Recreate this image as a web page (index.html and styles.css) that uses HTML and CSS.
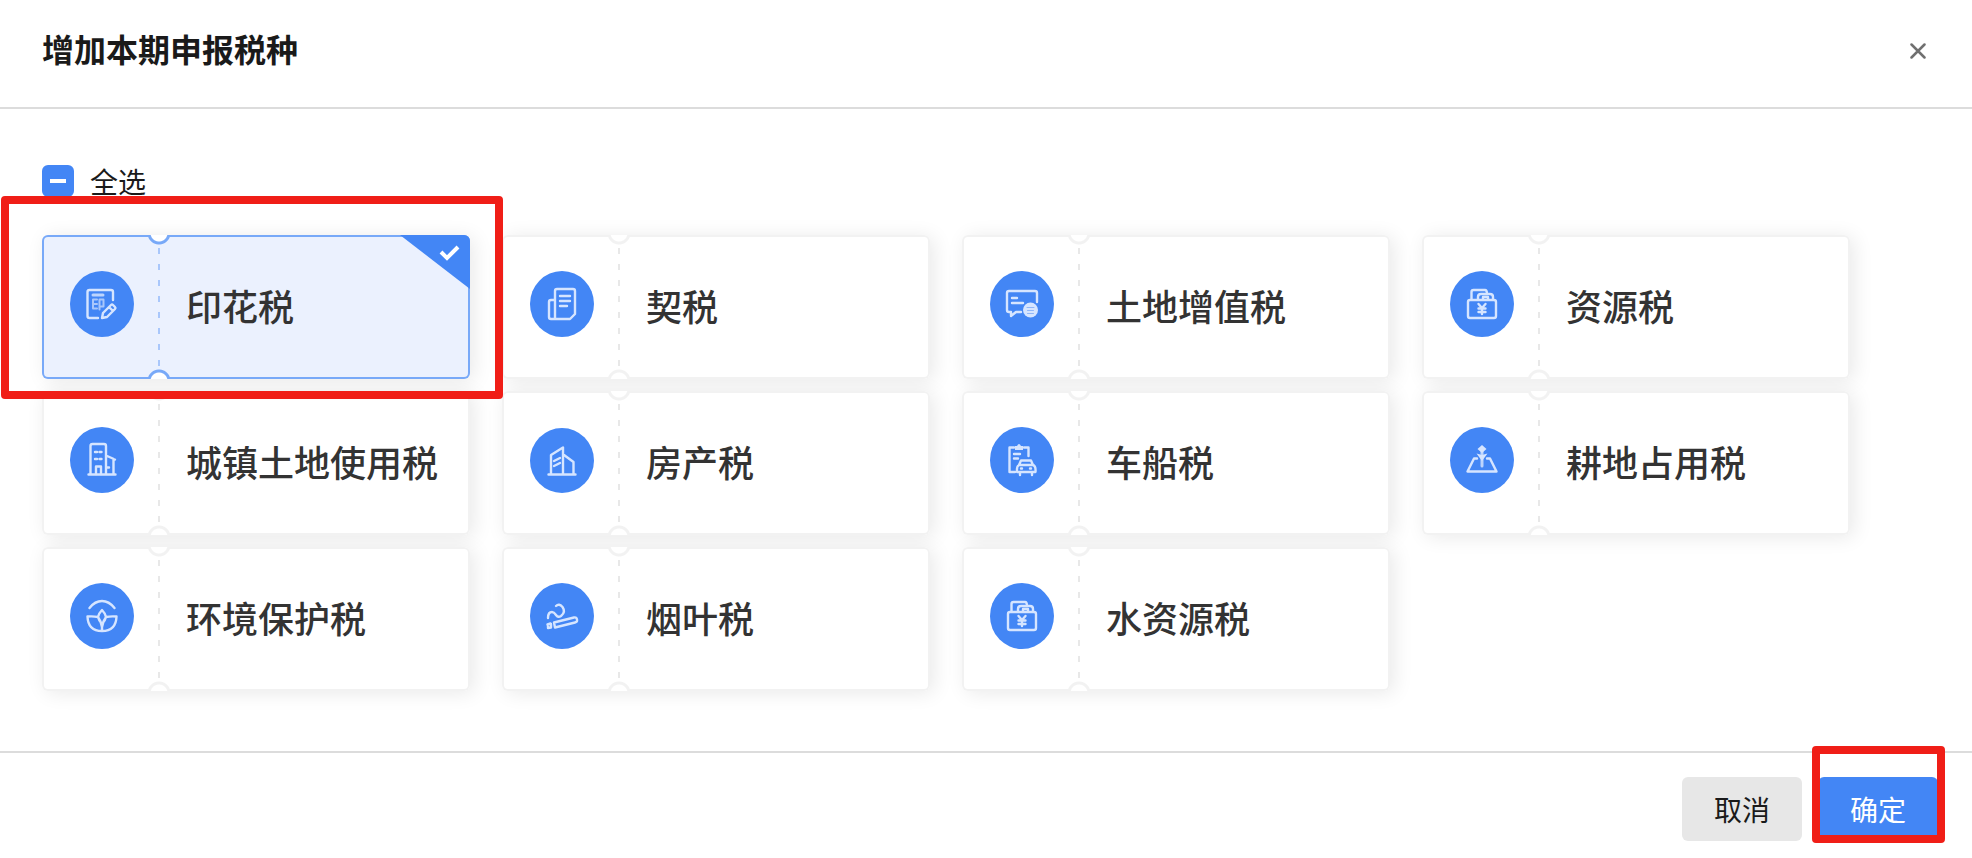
FILE: index.html
```html
<!DOCTYPE html>
<html lang="zh-CN">
<head>
    <meta charset="UTF-8">
    <meta name="viewport" content="width=device-width, initial-scale=1">
    <title>增加本期申报税种</title>
    <link rel="stylesheet" href="styles.css">
</head>
<body>

    <div class="dialog">
        <header class="dialog_header">
            <h1 class="dialog_title">增加本期申报税种</h1>
            <button type="button" class="close_btn" aria-label="关闭">
                <svg width="16" height="16" viewBox="0 0 16 16"><path d="M1.5 1.5 14.5 14.5M14.5 1.5 1.5 14.5"/></svg>
            </button>
        </header>

        <main class="dialog_body">
            <label class="check_all">
                <input type="checkbox" id="check_all" class="check_box">
                <span>全选</span>
            </label>

            <ul class="tax_list">
                <li class="tax_item">
                    <label class="tax_card">
                        <input type="checkbox" class="tax_input" checked>
                        <svg class="tax_icon" viewBox="0 0 64 66">
                            <ellipse class="disc" cx="32" cy="33" rx="32" ry="33"/>
                            <path d="M43 29V21a2 2 0 0 0-2-2H19.5a2 2 0 0 0-2 2V45a2 2 0 0 0 2 2H28"/>
                            <path class="bold" d="M23 24H33"/>
                            <path class="thin" d="M27 28.5H23V37.5H27M23 33H27M29.5 38.5V28.5H33.5V35.5H31"/>
                            <path d="M32 47l1-5 8-8q1-1 2 0l2 2q1 1 0 2l-8 8zM39 36l4 4"/>
                        </svg>
                        <span class="tax_name">印花税</span>
                        <svg class="tax_corner" viewBox="0 0 70 54"><path class="fold" d="M0 0H70V54z"/><path class="tick" d="M41 17 47 23 58 12"/></svg>
                    </label>
                    <span class="mark mark_card"></span>
                </li>
                <li class="tax_item">
                    <label class="tax_card">
                        <input type="checkbox" class="tax_input">
                        <svg class="tax_icon" viewBox="0 0 64 66">
                            <ellipse class="disc" cx="32" cy="33" rx="32" ry="33"/>
                            <path d="M25 48V20a2 2 0 0 1 2-2H43a2 2 0 0 1 2 2V43l-5 5H21a2 2 0 0 1-2-2V31a2 2 0 0 1 2-2H25"/>
                            <path d="M30 25H40M30 30H40M30 35H37"/>
                        </svg>
                        <span class="tax_name">契税</span>
                        <svg class="tax_corner" viewBox="0 0 70 54"><path class="fold" d="M0 0H70V54z"/><path class="tick" d="M41 17 47 23 58 12"/></svg>
                    </label>
                </li>
                <li class="tax_item">
                    <label class="tax_card">
                        <input type="checkbox" class="tax_input">
                        <svg class="tax_icon" viewBox="0 0 64 66">
                            <ellipse class="disc" cx="32" cy="33" rx="32" ry="33"/>
                            <path d="M47 31V22a2 2 0 0 0-2-2H19a2 2 0 0 0-2 2V39a2 2 0 0 0 2 2h2v4l5-4h5"/>
                            <path d="M22 27H27M22 32H33"/>
                            <circle class="fill" cx="40.5" cy="39" r="7.5"/>
                            <path class="blue" d="M37 36.5H44M37.5 39.5H43.5M37.5 42.5H43.5"/>
                        </svg>
                        <span class="tax_name">土地增值税</span>
                        <svg class="tax_corner" viewBox="0 0 70 54"><path class="fold" d="M0 0H70V54z"/><path class="tick" d="M41 17 47 23 58 12"/></svg>
                    </label>
                </li>
                <li class="tax_item">
                    <label class="tax_card">
                        <input type="checkbox" class="tax_input">
                        <svg class="tax_icon" viewBox="0 0 64 66">
                            <ellipse class="disc" cx="32" cy="33" rx="32" ry="33"/>
                            <rect x="18" y="29" width="28" height="18" rx="2"/>
                            <path d="M21.5 28V21a2 2 0 0 1 2-2H35q2 0 2 4M28 28V26q0-3 3-3H40q3 0 3 3V28M33 28v-2h5v2"/>
                            <path d="M28.5 33 32 37 35.5 33M32 37V43M28.5 37.5H35.5M28.5 41H35.5"/>
                        </svg>
                        <span class="tax_name">资源税</span>
                        <svg class="tax_corner" viewBox="0 0 70 54"><path class="fold" d="M0 0H70V54z"/><path class="tick" d="M41 17 47 23 58 12"/></svg>
                    </label>
                </li>
                <li class="tax_item">
                    <label class="tax_card">
                        <input type="checkbox" class="tax_input">
                        <svg class="tax_icon" viewBox="0 0 64 66">
                            <ellipse class="disc" cx="32" cy="33" rx="32" ry="33"/>
                            <path d="M18.5 47.5H45.5M20.5 47V19a2 2 0 0 1 2-2H34a2 2 0 0 1 2 2V47M36 28.5 45 32.5M43.5 32V47"/>
                            <path d="M25 25H27M29.5 25H31.5M25 32H27M29.5 32H31.5M26 47V39.5H31V47M37 40.5H39"/>
                        </svg>
                        <span class="tax_name">城镇土地使用税</span>
                        <svg class="tax_corner" viewBox="0 0 70 54"><path class="fold" d="M0 0H70V54z"/><path class="tick" d="M41 17 47 23 58 12"/></svg>
                    </label>
                </li>
                <li class="tax_item">
                    <label class="tax_card">
                        <input type="checkbox" class="tax_input">
                        <svg class="tax_icon" viewBox="0 0 64 66">
                            <ellipse class="disc" cx="32" cy="33.5" rx="32" ry="32.5"/>
                            <path d="M18.5 47.5H45.5M21 47V28L33 20.5V47M34 28 43.5 35V47"/>
                            <path d="M24 34 30 31M24 39 30 36"/>
                        </svg>
                        <span class="tax_name">房产税</span>
                        <svg class="tax_corner" viewBox="0 0 70 54"><path class="fold" d="M0 0H70V54z"/><path class="tick" d="M41 17 47 23 58 12"/></svg>
                    </label>
                </li>
                <li class="tax_item">
                    <label class="tax_card">
                        <input type="checkbox" class="tax_input">
                        <svg class="tax_icon" viewBox="0 0 64 66">
                            <ellipse class="disc" cx="32" cy="33" rx="32" ry="33"/>
                            <path d="M25 45H19.5V20.5H24M34 20.5H38.5V29M24 27H30M24 31.5H28"/>
                            <path class="fill" d="M25 23v-4h2q2-4 4 0h2v4z"/>
                            <path d="M29 38 31 33.5H41L43 38M29 38H43Q46 39 45.5 45H27Q26.5 39 29 38zM30 45V48M42 45V48M31 41.5H32M40 41.5H41"/>
                        </svg>
                        <span class="tax_name">车船税</span>
                        <svg class="tax_corner" viewBox="0 0 70 54"><path class="fold" d="M0 0H70V54z"/><path class="tick" d="M41 17 47 23 58 12"/></svg>
                    </label>
                </li>
                <li class="tax_item">
                    <label class="tax_card">
                        <input type="checkbox" class="tax_input">
                        <svg class="tax_icon" viewBox="0 0 64 66">
                            <ellipse class="disc" cx="32" cy="33" rx="32" ry="33"/>
                            <path d="M27 31.5H24L17.5 44.5H46.5L40 31.5H37"/>
                            <path class="bold" d="M32 22V39"/>
                            <path class="fill" d="M32 18 36.5 22 32 26 27.5 22zM26.500 26.500 32 28 37.500 26.500 32 34z"/>
                        </svg>
                        <span class="tax_name">耕地占用税</span>
                        <svg class="tax_corner" viewBox="0 0 70 54"><path class="fold" d="M0 0H70V54z"/><path class="tick" d="M41 17 47 23 58 12"/></svg>
                    </label>
                </li>
                <li class="tax_item">
                    <label class="tax_card">
                        <input type="checkbox" class="tax_input">
                        <svg class="tax_icon" viewBox="0 0 64 66">
                            <ellipse class="disc" cx="32" cy="33" rx="32" ry="33"/>
                            <path d="M19.5 25Q25 18 32 18T44.500 25"/>
                            <path d="M28 34Q29 30 32 27Q35 30 36 34Q35 38 32 41Q29 38 28 34zM32 41V48M28 34Q23 33 17.500 33.500Q18 48 32 48Q46 48 46.500 33.500Q41 33 36 34M28 34Q31 38 32 44Q33 38 36 34"/>
                        </svg>
                        <span class="tax_name">环境保护税</span>
                        <svg class="tax_corner" viewBox="0 0 70 54"><path class="fold" d="M0 0H70V54z"/><path class="tick" d="M41 17 47 23 58 12"/></svg>
                    </label>
                </li>
                <li class="tax_item">
                    <label class="tax_card">
                        <input type="checkbox" class="tax_input">
                        <svg class="tax_icon" viewBox="0 0 64 66">
                            <ellipse class="disc" cx="32" cy="33" rx="32" ry="33"/>
                            <path d="M18 35Q18 29 22 29Q24 29 26 32Q28 35 31 33Q36 29 32.500 24Q29 20 26 23"/>
                            <path d="M24 39.500 44 34.500Q46.500 34 47 36.500Q47.500 39 45 39.500L25 44.500zM17.500 41.500 20.500 40.500M18 45 21 44.500M18 42V45M21 41V44"/>
                        </svg>
                        <span class="tax_name">烟叶税</span>
                        <svg class="tax_corner" viewBox="0 0 70 54"><path class="fold" d="M0 0H70V54z"/><path class="tick" d="M41 17 47 23 58 12"/></svg>
                    </label>
                </li>
                <li class="tax_item">
                    <label class="tax_card">
                        <input type="checkbox" class="tax_input">
                        <svg class="tax_icon" viewBox="0 0 64 66">
                            <ellipse class="disc" cx="32" cy="33" rx="32" ry="33"/>
                            <rect x="18" y="29" width="28" height="18" rx="2"/>
                            <path d="M21.5 28V21a2 2 0 0 1 2-2H35q2 0 2 4M28 28V26q0-3 3-3H40q3 0 3 3V28M33 28v-2h5v2"/>
                            <path d="M28.5 33 32 37 35.5 33M32 37V43M28.5 37.5H35.5M28.5 41H35.5"/>
                        </svg>
                        <span class="tax_name">水资源税</span>
                        <svg class="tax_corner" viewBox="0 0 70 54"><path class="fold" d="M0 0H70V54z"/><path class="tick" d="M41 17 47 23 58 12"/></svg>
                    </label>
                </li>
            </ul>
        </main>

        <footer class="dialog_footer">
            <button type="button" class="btn">取消</button>
            <div class="confirm">
                <button type="button" class="btn btn_primary">确定</button>
                <span class="mark mark_confirm"></span>
            </div>
        </footer>
    </div>

    <script>
        //input#check_all tag
        var check_all = document.getElementById('check_all');
        //tax checkboxes
        var inputs = document.querySelectorAll('.tax_input');

        function update_check_all(){
            var count = document.querySelectorAll('.tax_input:checked').length;
            check_all.checked = count === inputs.length;
            check_all.indeterminate = count > 0 && count < inputs.length;
        }//update_check_all

        check_all.addEventListener('change', function(){
            inputs.forEach(function(input){
                input.checked = check_all.checked;
            });
        });

        inputs.forEach(function(input){
            input.addEventListener('change', update_check_all);
        });

        update_check_all();
    </script>
</body>
</html>
```

FILE: styles.css
```css
* {
    box-sizing: border-box;
}
body {
    margin: 0;
    background: #fff;
    color: #1a1a1a;
    font-family: "Noto Sans CJK SC", "Noto Sans", sans-serif;
    font-size: 28px;
}
.dialog {
    display: flex;
    flex-direction: column;
    min-height: 100vh;
}
.dialog_header {
    display: flex;
    align-items: flex-start;
    justify-content: space-between;
    padding: 24px 42px 35px;
    border-bottom: 2px solid #dcdcdc;
}
.dialog_title {
    margin: 0;
    font-size: 32px;
    line-height: 48px;
    font-weight: 700;
}
.close_btn {
    display: flex;
    margin-top: 15px;
    padding: 4px;
    border: none;
    background: none;
    cursor: pointer;
}
.close_btn path {
    fill: none;
    stroke: #707070;
    stroke-width: 2.5;
    stroke-linecap: round;
}
.dialog_body {
    flex: 1;
    padding: 56px 42px 60px;
}
.check_all {
    display: flex;
    align-items: center;
    gap: 16px;
    width: fit-content;
    line-height: 30px;
}
.check_box {
    appearance: none;
    display: grid;
    place-items: center;
    width: 32px;
    height: 32px;
    margin: 0;
    border: 2px solid #dcdcdc;
    border-radius: 6px;
}
.check_box:checked,
.check_box:indeterminate {
    border-color: #4386f5;
    background: #4386f5;
}
.check_box:indeterminate::before {
    content: "";
    width: 16px;
    height: 4px;
    background: #fff;
}
.check_box:checked::before {
    content: "";
    width: 16px;
    height: 8px;
    border: solid #fff;
    border-width: 0 0 3px 3px;
    transform: rotate(-45deg);
}
.tax_list {
    display: grid;
    grid-template-columns: repeat(auto-fill, 428px);
    gap: 12px 32px;
    margin: 38px 0 0;
    padding: 0;
    list-style: none;
}
.tax_item {
    position: relative;
}
/* shadow sits under every card, so it never tints a neighbour */
.tax_item::before {
    content: "";
    position: absolute;
    inset: 0;
    z-index: -1;
    border-radius: 6px;
    box-shadow: 4px 2px 20px rgba(0, 0, 0, 0.09);
}
.tax_card {
    --line: #f2f2f2;
    --dash: #e8e8e8;
    position: relative;
    display: flex;
    align-items: center;
    height: 144px;
    padding-left: 28px;
    border-radius: 6px;
    background: #fff;
    box-shadow: inset 0 0 0 2px var(--line);
    overflow: hidden;
    cursor: pointer;
}
.tax_card:has(.tax_input:checked) {
    --line: #78a9f8;
    --dash: #a9c7fb;
    background: #ebf1fe;
}
/* dashed tear line */
.tax_card::before {
    content: "";
    order: 1;
    width: 2px;
    height: 118px;
    margin: 0 26px 0 24px;
    background: repeating-linear-gradient(var(--dash) 0 6px, transparent 6px 16px);
}
/* notches on both ends of the tear line */
.tax_card::after {
    content: "";
    position: absolute;
    top: 0;
    bottom: 0;
    left: 106px;
    width: 22px;
    background:
        radial-gradient(circle at 11px -2px, #fff 8px, var(--line) 9px 11px, transparent 12px) top / 22px 12px no-repeat,
        radial-gradient(circle at 11px 14px, #fff 8px, var(--line) 9px 11px, transparent 12px) bottom / 22px 12px no-repeat;
}
.tax_input {
    appearance: none;
    position: absolute;
    inset: 0;
    margin: 0;
    cursor: pointer;
}
.tax_icon {
    width: 64px;
    height: 66px;
    margin-bottom: 6px;
    fill: none;
    stroke: #d6e5ff;
    stroke-width: 2.4;
    stroke-linecap: round;
    stroke-linejoin: round;
}
.tax_icon .disc {
    fill: #4386f5;
    stroke: none;
}
.tax_icon .fill {
    fill: #d6e5ff;
    stroke: none;
}
.tax_icon .bold {
    stroke-width: 3;
    stroke: #bcd4fd;
}
.tax_icon .thin {
    stroke-width: 2;
    stroke: #a9c7fb;
}
.tax_icon .blue {
    stroke: #8fb6fa;
    stroke-width: 1;
}
.tax_name {
    order: 2;
    padding-bottom: 4px;
    color: #333;
    font-size: 36px;
    line-height: 48px;
    font-weight: 500;
    white-space: nowrap;
}
.tax_corner {
    display: none;
    position: absolute;
    top: 0;
    right: 0;
    width: 70px;
    height: 54px;
}
.tax_input:checked ~ .tax_corner {
    display: block;
}
.tax_corner .fold {
    fill: #4386f5;
}
.tax_corner .tick {
    fill: none;
    stroke: #fff;
    stroke-width: 4;
}
.dialog_footer {
    display: flex;
    justify-content: flex-end;
    gap: 16px;
    padding: 24px 34px 17px;
    border-top: 2px solid #dcdcdc;
}
.confirm {
    position: relative;
}
.btn {
    display: block;
    width: 120px;
    height: 64px;
    padding: 0;
    border: none;
    border-radius: 6px;
    background: #e7e7e7;
    color: #1a1a1a;
    font: inherit;
    cursor: pointer;
}
.btn_primary {
    background: #4386f5;
    color: #fff;
}
/* red highlight frames */
.mark {
    position: absolute;
    z-index: 2;
    border: 8px solid #f01e17;
    border-radius: 4px;
    pointer-events: none;
}
.mark_card {
    inset: -39px -33px -20px -41px;
}
.mark_confirm {
    inset: -31px -7px -2px -6px;
}
```
